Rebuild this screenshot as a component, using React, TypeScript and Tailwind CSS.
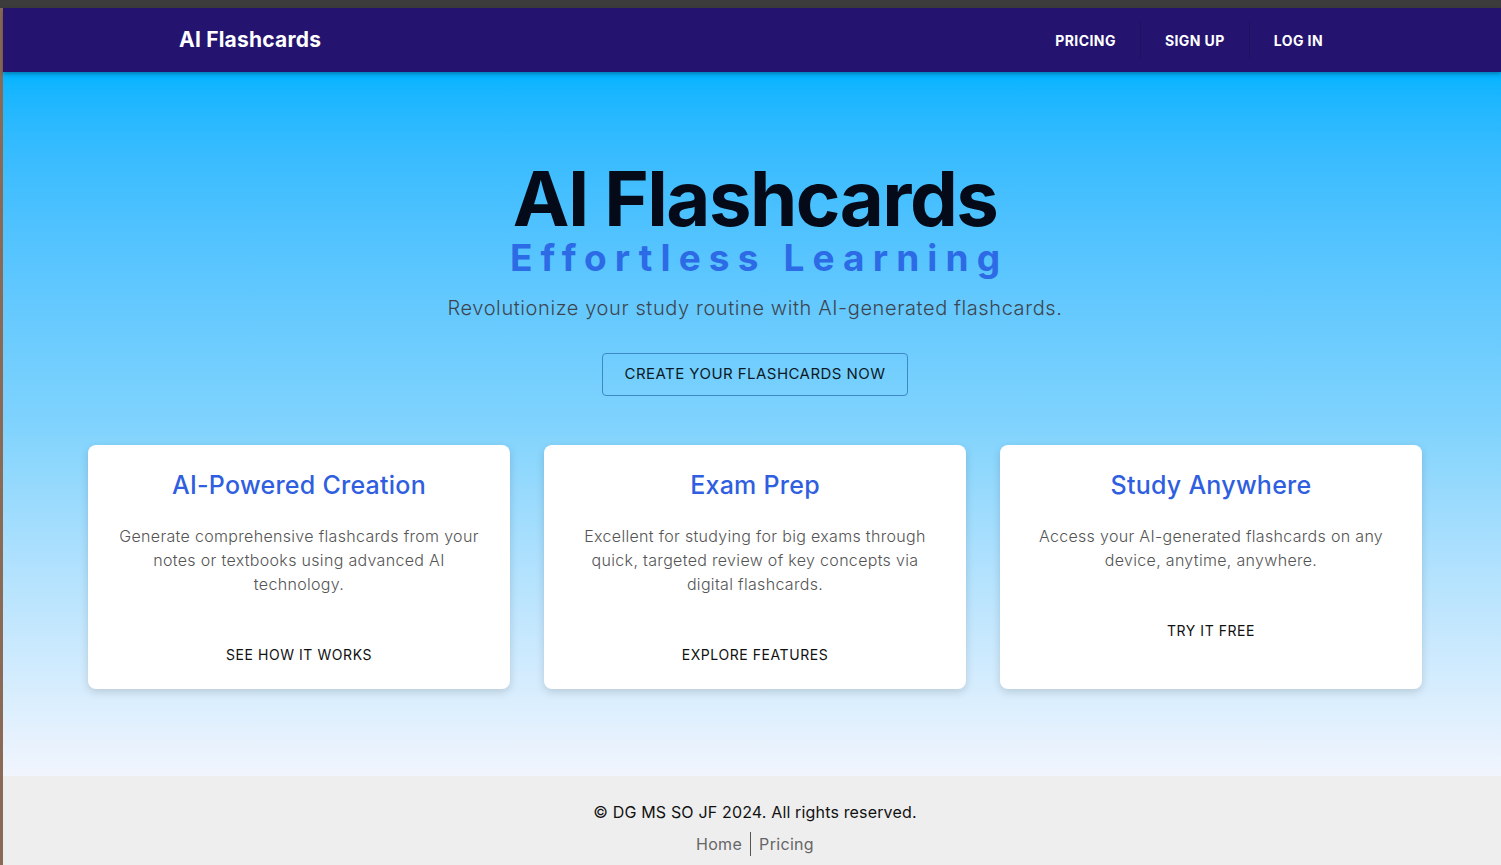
import React from "react";

const font = { fontFamily: "Inter, 'Open Sans', sans-serif" };

const features = [
  {
    title: "AI-Powered Creation",
    text: "Generate comprehensive flashcards from your notes or textbooks using advanced AI technology.",
    cta: "See how it works",
  },
  {
    title: "Exam Prep",
    text: "Excellent for studying for big exams through quick, targeted review of key concepts via digital flashcards.",
    cta: "Explore features",
  },
  {
    title: "Study Anywhere",
    text: "Access your AI-generated flashcards on any device, anytime, anywhere.",
    cta: "Try it free",
  },
];

function NavBar() {
  return (
    <header className="relative z-10 h-16 bg-[#24146f] pl-[6px] shadow-[0_2px_4px_rgba(0,0,0,0.3)]">
      <div className="mx-auto flex h-full max-w-[1200px] items-center justify-between px-6">
        <span className="text-[21px] font-bold tracking-[0.01em] text-white">AI Flashcards</span>
        <nav className="-mr-4 flex items-center self-stretch py-[14px] text-[14px] font-bold tracking-[0.03em] text-white">
          <a className="flex h-full items-center px-6">PRICING</a>
          <span className="h-full w-px bg-black/15" />
          <a className="flex h-full items-center px-6">SIGN UP</a>
          <span className="h-full w-px bg-black/15" />
          <a className="flex h-full items-center px-6">LOG IN</a>
        </nav>
      </div>
    </header>
  );
}

function FeatureCard({ title, text, cta }: { title: string; text: string; cta: string }) {
  return (
    <div className="flex h-[244px] flex-col items-center rounded-lg bg-white px-6 pt-[22px] text-center shadow-[0_3px_8px_rgba(0,0,0,0.15)]">
      <h3 className="text-[25px] font-medium tracking-[0.01em] text-[#2f5fe0]">{title}</h3>
      <p className="mt-[20px] text-[16px] font-light leading-6 tracking-[0.02em] text-[#555]">{text}</p>
      <button className="mt-[48px] text-[14px] uppercase tracking-[0.04em] text-[#111]">{cta}</button>
    </div>
  );
}

export default function App() {
  return (
    <div className="flex min-h-screen bg-[#3c3c3c] pt-2" style={font}>
      <div className="w-[3px] bg-[#8a6a55]" />
      <div className="flex flex-1 flex-col">
        <NavBar />
        <main className="flex-1 bg-gradient-to-b from-[#00b4ff] via-[#7fd3fd] to-[#f1f5fd] pb-[87px] pl-[6px]">
          <section className="flex flex-col items-center pt-[88px] text-center">
            <h1 className="text-[76px] font-bold leading-[1] tracking-[-0.02em] text-[#040a18]">AI Flashcards</h1>
            <h2 className="mt-[2px] pl-[0.22em] text-[37px] font-bold leading-[1.1] tracking-[0.22em] text-[#2d6ae6]">
              Effortless Learning
            </h2>
            <p className="mt-[14px] text-[20px] font-light tracking-[0.03em] text-[#3d4650]">
              Revolutionize your study routine with AI-generated flashcards.
            </p>
            <button className="mt-[30px] h-[43px] rounded border border-[#3f88c8] px-[22px] text-[15px] uppercase tracking-[0.03em] text-[#0d1a26]">
              Create your flashcards now
            </button>
          </section>
          <div className="mx-auto mt-[49px] grid w-[1334px] grid-cols-3 gap-[34px]">
            {features.map((f) => (
              <FeatureCard key={f.title} {...f} />
            ))}
          </div>
        </main>
        <footer className="flex h-[89px] flex-col items-center bg-[#eeeeee] pl-[6px] pt-[24px]">
          <p className="text-[16px] tracking-[0.01em] text-[#111]">© DG MS SO JF 2024. All rights reserved.</p>
          <div className="mt-[8px] flex items-center text-[16px] tracking-[0.02em] text-[#666]">
            <a className="pr-2">Home</a>
            <span className="h-[24px] w-px bg-[#555]" />
            <a className="pl-2">Pricing</a>
          </div>
        </footer>
      </div>
    </div>
  );
}
